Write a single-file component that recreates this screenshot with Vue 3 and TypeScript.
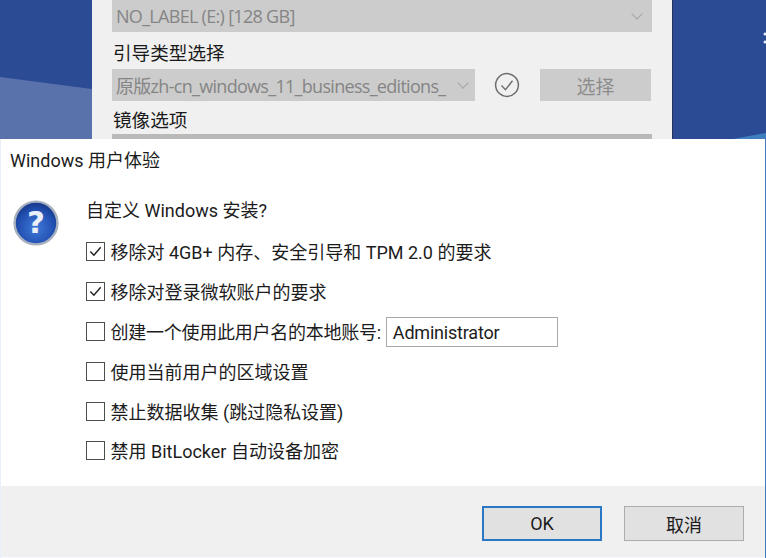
<script setup lang="ts">
interface Option {
  label: string
  checked: boolean
  input?: string
}

const options: Option[] = [
  { label: '移除对 4GB+ 内存、安全引导和 TPM 2.0 的要求', checked: true },
  { label: '移除对登录微软账户的要求', checked: true },
  { label: '创建一个使用此用户名的本地账号:', checked: false, input: 'Administrator' },
  { label: '使用当前用户的区域设置', checked: false },
  { label: '禁止数据收集 (跳过隐私设置)', checked: false },
  { label: '禁用 BitLocker 自动设备加密', checked: false },
]
</script>

<template>
  <div class="screen">
    <div class="backdrop">
      <svg class="wave" viewBox="0 0 766 139" aria-hidden="true">
        <polygon points="0,77 92,89 92,139 0,139" fill="#5a72ac" />
        <polygon points="733,139 766,133 766,139" fill="#3f7fc0" />
        <circle cx="765" cy="34" r="1.5" fill="#e8eefa" />
        <circle cx="765" cy="42" r="1.5" fill="#e8eefa" />
      </svg>
      <div class="panel">
        <div class="combo"><span class="value">NO_LABEL (E:) [128 GB]</span><i class="chev"></i></div>
        <div class="head boot-head">引导类型选择</div>
        <div class="row">
          <div class="combo boot"><span class="value">原版zh-cn_windows_11_business_editions_</span><i class="chev"></i></div>
          <svg class="verify" viewBox="0 0 26 26" aria-hidden="true">
            <circle cx="13" cy="13" r="11.4" fill="none" stroke="#6e6e6e" stroke-width="1.5" />
            <path d="M7.5 13.5l4 4.2 7-9" fill="none" stroke="#6e6e6e" stroke-width="1.4" />
          </svg>
          <div class="pick">选择</div>
        </div>
        <div class="head image-head">镜像选项</div>
        <div class="combo stub"></div>
      </div>
    </div>

    <div class="dialog">
      <div class="title">Windows 用户体验</div>
      <div class="body">
        <svg class="help" viewBox="0 0 46 46" aria-hidden="true">
          <defs>
            <radialGradient id="orb" cx="0.5" cy="0.62" r="0.6">
              <stop offset="0" stop-color="#3f7ad8" />
              <stop offset="0.65" stop-color="#2352b4" />
              <stop offset="1" stop-color="#17398c" />
            </radialGradient>
          </defs>
          <circle cx="23" cy="23" r="21.4" fill="url(#orb)" stroke="#a7b0bf" stroke-width="2.4" />
          <text x="23" y="33" text-anchor="middle" class="mark">?</text>
        </svg>
        <div class="content">
          <div class="question">自定义 Windows 安装?</div>
          <div v-for="o in options" :key="o.label" class="option">
            <span class="box">
              <svg v-if="o.checked" class="tick" viewBox="0 0 18 18" aria-hidden="true">
                <path d="M3.5 9l3.8 4L14.5 4.5" fill="none" stroke="#222" stroke-width="1.5" />
              </svg>
            </span>
            <span class="label" :class="{ tight: o.input }">{{ o.label }}</span>
            <span v-if="o.input" class="field">{{ o.input }}</span>
          </div>
        </div>
      </div>
      <div class="footer">
        <button class="btn primary">OK</button>
        <button class="btn">取消</button>
      </div>
    </div>
  </div>
</template>

<style>
html, body { margin: 0; background: #2c4b95; }
</style>

<style scoped>
.screen {
  width: 766px;
  height: 558px;
  overflow: hidden;
  display: flex;
  flex-direction: column;
  font-family: "Roboto", "Noto Sans CJK SC", sans-serif;
  color: #1c1c1c;
}
.backdrop {
  position: relative;
  height: 139px;
  flex: none;
  background: #2c4b95;
  overflow: hidden;
}
.wave { position: absolute; left: 0; top: 0; width: 766px; height: 139px; }
.panel {
  position: relative;
  box-sizing: border-box;
  width: 580px;
  height: 139px;
  margin-left: 92px;
  padding: 0 20px;
  background: #f0f0f0;
  box-shadow: 1px 0 0 #24355f;
  overflow: hidden;
}
.combo {
  height: 32px;
  display: flex;
  align-items: center;
  justify-content: space-between;
  box-sizing: border-box;
  padding: 0 11px 0 4px;
  background: #cccccc;
}
.value {
  font-family: "Open Sans", "Noto Sans CJK SC", sans-serif;
  font-size: 18px;
  color: #858585;
  white-space: nowrap;
  letter-spacing: -0.7px;
}
.chev {
  width: 7px;
  height: 7px;
  margin-top: -5px;
  border-right: 1px solid #a5a5a5;
  border-bottom: 1px solid #a5a5a5;
  transform: rotate(45deg);
  flex: none;
}
.head {
  font-size: 18.6px;
  line-height: 24px;
  padding-left: 1px;
  color: #1a1a1a;
}
.boot-head { margin-top: 10px; }
.row { display: flex; align-items: center; margin-top: 3px; }
.boot { width: 363px; flex: none; padding-right: 8px; }
.verify { width: 26px; height: 26px; margin-left: 19px; flex: none; }
.pick {
  width: 111px;
  height: 32px;
  margin-left: 20px;
  display: flex;
  align-items: center;
  justify-content: center;
  background: #cccccc;
  color: #8c8c8c;
  font-size: 19px;
}
.image-head { margin-top: 8px; }
.stub { margin-top: 1px; background: #b9b9b9; }

.dialog {
  flex: 1;
  min-height: 0;
  display: flex;
  flex-direction: column;
  background: #ffffff;
  border-right: 1px solid #3f7fc0;
  border-left: 1px solid #e9eefb;
}
.title {
  height: 44px;
  line-height: 44px;
  padding-left: 9px;
  font-size: 18px;
  flex: none;
}
.body { flex: 1; min-height: 0; display: flex; }
.help { width: 46px; height: 46px; margin: 17px 0 0 12px; flex: none; }
.mark {
  font-family: "DejaVu Sans", sans-serif;
  font-size: 31px;
  font-weight: 700;
  fill: #e9eef8;
}
.content { margin-left: 27px; padding-top: 16px; min-width: 0; }
.question { font-size: 18px; line-height: 24px; margin-bottom: 9px; }
.option { display: flex; align-items: center; height: 39.8px; }
.box {
  width: 19px;
  height: 19px;
  box-sizing: border-box;
  border: 1px solid #4d4d4d;
  background: #ffffff;
  flex: none;
}
.tick { display: block; width: 17px; height: 17px; }
.label { margin: -1px 0 0 5.5px; font-size: 18px; white-space: nowrap; }
.tight { letter-spacing: -0.25px; }
.field {
  width: 172px;
  height: 30px;
  box-sizing: border-box;
  margin: 2px 0 0 5px;
  padding-left: 6px;
  border: 1px solid #a8a8a8;
  font-size: 18px;
  line-height: 29px;
  letter-spacing: -0.2px;
}
.footer {
  height: 72px;
  flex: none;
  box-sizing: border-box;
  display: flex;
  justify-content: flex-end;
  align-items: flex-start;
  gap: 22px;
  padding: 20px 21px 0 0;
  background: #f0f0f0;
  border-bottom: 1px solid #f7f9fe;
}
.btn {
  width: 120px;
  height: 35px;
  padding: 0;
  background: #e1e1e1;
  border: 1px solid #adadad;
  border-radius: 0;
  color: #1c1c1c;
  font-family: inherit;
  font-size: 18px;
}
.primary { border: 2px solid #2a78c4; }
</style>
